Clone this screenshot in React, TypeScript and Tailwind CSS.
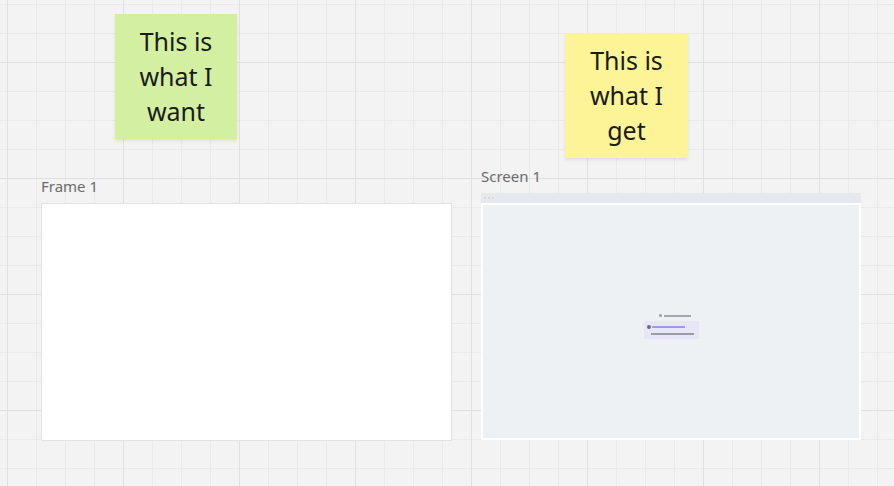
import React from "react";

const font = { fontFamily: '"Noto Sans", "Open Sans", sans-serif' };

function Sticky({
  lines,
  className,
}: {
  lines: string[];
  className: string;
}) {
  return (
    <div
      className={`absolute flex flex-col items-center justify-center text-[25px] leading-[35px] text-[#1a1a1a] shadow-[0_2px_3px_rgba(0,0,0,0.08)] ${className}`}
    >
      {lines.map((l) => (
        <span key={l}>{l}</span>
      ))}
    </div>
  );
}

export default function App() {
  return (
    <div
      style={font}
      className="relative h-[486px] w-[894px] overflow-hidden bg-[#f3f3f3] [background-image:linear-gradient(to_right,#e0e0e0_1px,transparent_1px),linear-gradient(to_bottom,#e0e0e0_1px,transparent_1px),linear-gradient(to_right,#e9e9e9_1px,transparent_1px),linear-gradient(to_bottom,#e9e9e9_1px,transparent_1px)] [background-size:116px_116px,116px_116px,29px_29px,29px_29px] [background-position:7px_62px,7px_62px,7px_4px,7px_4px]"
    >
      <Sticky
        lines={["This is", "what I", "want"]}
        className="left-[115px] top-[14px] h-[125px] w-[122px] bg-[#d3f0a2]"
      />
      <Sticky
        lines={["This is", "what I", "get"]}
        className="left-[565px] top-[33px] h-[125px] w-[123px] bg-[#fcf497]"
      />

      {/* Frame 1 */}
      <div className="absolute left-[41px] top-[177px] flex flex-col">
        <span className="h-[26px] text-[15px] leading-[18px] text-[#6b6b6b]">
          Frame 1
        </span>
        <div className="h-[238px] w-[411px] border border-[#e2e2e2] bg-white" />
      </div>

      {/* Screen 1 */}
      <div className="absolute left-[481px] top-[167px] flex flex-col">
        <span className="h-[26px] text-[15px] leading-[18px] text-[#6b6b6b]">
          Screen 1
        </span>
        <div className="flex h-[10px] w-[380px] items-center gap-[2px] bg-[#e5e8ec] pl-[3px]">
          <span className="h-[2px] w-[2px] rounded-full bg-[#cfd3d9]" />
          <span className="h-[2px] w-[2px] rounded-full bg-[#cfd3d9]" />
          <span className="h-[2px] w-[2px] rounded-full bg-[#cfd3d9]" />
        </div>
        <div className="flex h-[237px] w-[380px] items-center justify-center border-2 border-white bg-[#eef1f3]">
          <div className="flex flex-col items-center gap-[4px] pt-[10px]">
            <div className="flex items-center gap-[2px] pl-[8px]">
              <span className="h-[3px] w-[3px] rounded-full bg-[#9a9ea6]" />
              <span className="h-[2px] w-[27px] bg-[#a4a8ae]" />
            </div>
            <div className="flex h-[18px] w-[55px] flex-col justify-center gap-[4px] bg-[#e6e6f7] pl-[3px]">
              <div className="flex items-center gap-[1px]">
                <span className="h-[4px] w-[4px] rounded-full bg-[#6b6e80]" />
                <span className="h-[2px] w-[33px] bg-[#9a9de6]" />
              </div>
              <span className="ml-[4px] h-[2px] w-[43px] bg-[#9a9ea4]" />
            </div>
          </div>
        </div>
      </div>
    </div>
  );
}
